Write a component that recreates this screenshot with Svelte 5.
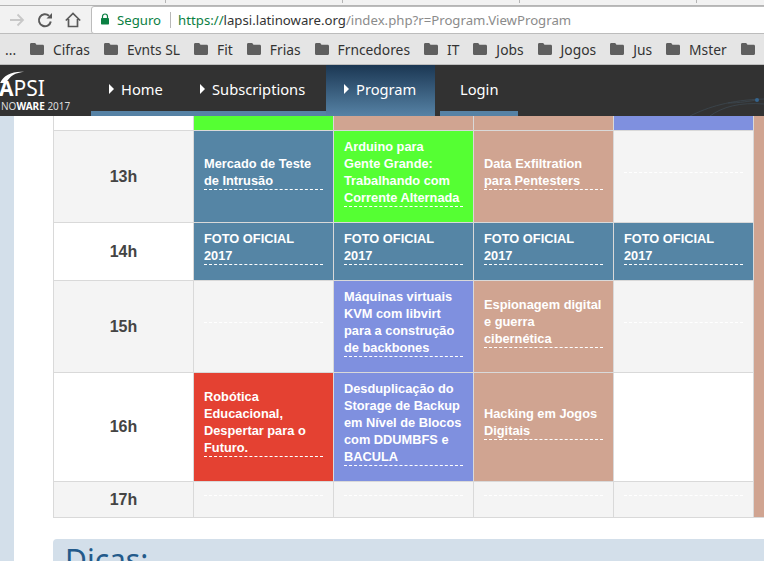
<script>
  const tabs = [166, 177, 177, 177];

  const bookmarks = ['Cifras', 'Evnts SL', 'Fit', 'Frias', 'Frncedores', 'IT', 'Jobs', 'Jogos', 'Jus', 'Mster', ''];

  const links = [
    { label: 'Home', arrow: true, width: 91 },
    { label: 'Subscriptions', arrow: true, width: 144 },
    { label: 'Program', arrow: true, active: true, width: 109 },
    { label: 'Login', arrow: false, width: 78 }
  ];

  const rows = [
    {
      time: '13h', cls: 'r13', shade: true,
      cells: [
        { text: 'Mercado de Teste de Intrusão', color: 'steel' },
        { text: 'Arduino para Gente Grande: Trabalhando com Corrente Alternada', color: 'green' },
        { text: 'Data Exfiltration para Pentesters', color: 'tan' },
        { text: '', color: '' }
      ]
    },
    {
      time: '14h', cls: 'r14', shade: false,
      cells: [
        { text: 'FOTO OFICIAL 2017', color: 'steel' },
        { text: 'FOTO OFICIAL 2017', color: 'steel' },
        { text: 'FOTO OFICIAL 2017', color: 'steel' },
        { text: 'FOTO OFICIAL 2017', color: 'steel' }
      ]
    },
    {
      time: '15h', cls: 'r15', shade: true,
      cells: [
        { text: '', color: '' },
        { text: 'Máquinas virtuais KVM com libvirt para a construção de backbones', color: 'blue' },
        { text: 'Espionagem digital e guerra cibernética', color: 'tan' },
        { text: '', color: '' }
      ]
    },
    {
      time: '16h', cls: 'r16', shade: false,
      cells: [
        { text: 'Robótica Educacional, Despertar para o Futuro.', color: 'red' },
        { text: 'Desduplicação do Storage de Backup em Nível de Blocos com DDUMBFS e BACULA', color: 'blue' },
        { text: 'Hacking em Jogos Digitais', color: 'tan' },
        { text: '', color: '', none: true }
      ]
    },
    {
      time: '17h', cls: 'r17', shade: true,
      cells: [
        { text: '', color: '' },
        { text: '', color: '' },
        { text: '', color: '' },
        { text: '', color: '' }
      ]
    }
  ];
</script>

<div class="browser">
  <div class="tabstrip">
    {#each tabs as width}
      <span class="tab" style="width: {width}px"></span>
    {/each}
  </div>
  <div class="toolbar">
    <svg class="tool fwd" viewBox="0 0 16 16"><path d="M1 8h13M8.500 2.500 14 8l-5.500 5.500" fill="none" stroke="#c8c8c8" stroke-width="1.800"/></svg>
    <svg class="tool" viewBox="0 0 16 16"><path d="M13.800 9.500A6 6 0 1 1 12 3.800" fill="none" stroke="#5a5a5a" stroke-width="2"/><path d="M9.500 6.500h5.500V1z" fill="#5a5a5a"/></svg>
    <svg class="tool home" viewBox="0 0 16 16"><path d="M.8 8.500 8 1.500l7.200 7M3.500 7v7.500h9V7" fill="none" stroke="#5a5a5a" stroke-width="1.700"/></svg>
    <div class="omnibox">
      <svg class="lock" viewBox="0 0 10 12"><path d="M2.500 5V3.500a2.500 2.500 0 0 1 5 0V5" fill="none" stroke="#0b8043" stroke-width="1.200"/><rect x="1" y="5" width="8" height="6.500" rx=".7" fill="#0b8043"/></svg>
      <span class="secure">Seguro</span>
      <span class="sep"></span>
      <span class="url"><span class="scheme">https://</span><span class="host">lapsi.latinoware.org</span>/index.php?r=Program.ViewProgram</span>
    </div>
  </div>
  <div class="bookmarks">
    <span class="more">...</span>
    {#each bookmarks as name}
      <span class="mark">
        <svg viewBox="0 0 14 12"><path d="M0 1.500C0 .7.500 0 1.300 0h3.900l1.300 1.700h6.200c.7 0 1.300.6 1.300 1.300v7.500c0 .8-.6 1.500-1.300 1.500H1.300C.5 12 0 11.300 0 10.500z" fill="#5f5f5f"/></svg>
        {name}
      </span>
    {/each}
  </div>
</div>

<nav class="nav">
  <div class="logo">
    <svg class="swoosh" viewBox="0 0 30 14"><path d="M0 14C4 5 14 0 28 1 18 2 11 6 7 14z" fill="#fff"/></svg>
    <div class="apsi"><span class="big-a">A</span>PSI</div>
    <div class="noware">NO<b>WARE</b> 2017</div>
  </div>
  <ul class="menu">
    {#each links as link}
      <li class:active={link.active} class:login={!link.arrow} style="width: {link.width}px">
        {#if link.arrow}<i class="arrow"></i>{/if}{link.label}
      </li>
    {/each}
  </ul>
  <svg class="network" viewBox="0 0 104 51"><g fill="none" stroke="#3e4a54" stroke-width=".7"><path d="M30 51C48 42 70 35 104 34M50 51C62 42 80 37 104 39M68 38C80 38 90 36 97 35"/></g><circle cx="97" cy="35" r="2" fill="#35658f"/></svg>
</nav>

<main class="page">
  <div class="content">
    <table class="schedule">
      <tbody>
        <tr class="r12">
          <td></td>
          <td class="green"></td>
          <td class="tan"></td>
          <td class="tan"></td>
          <td class="blue"></td>
          <td class="tan" rowspan="6"></td>
        </tr>
        {#each rows as row}
          <tr class={row.cls}>
            <td class="time" class:shade={row.shade}>{row.time}</td>
            {#each row.cells as cell}
              <td class={cell.color} class:shade={row.shade && !cell.color}>
                {#if !cell.none}
                  <div class="talk" class:empty={!cell.text}>{cell.text}</div>
                {/if}
              </td>
            {/each}
          </tr>
        {/each}
      </tbody>
    </table>
    <section class="tips">
      <h2>Dicas:</h2>
    </section>
  </div>
</main>

<style>
  :global(body) {
    background: #d3dfea;
    overflow: hidden;
  }

  .browser {
    font-family: "Noto Sans", sans-serif;
    background: #e5e5e5;
  }

  .tabstrip {
    height: 6px;
    background: #f2f2f2;
    border-bottom: 1px solid #b5b5b5;
    box-sizing: border-box;
    display: flex;
  }

  .tab {
    height: 3px;
    border-right: 1px solid #b5b5b5;
    box-sizing: border-box;
  }

  .toolbar {
    height: 28px;
    background: #f2f2f2;
    display: flex;
    align-items: center;
    padding-left: 9px;
    gap: 12px;
    border-bottom: 1px solid #bdbdbd;
    box-sizing: border-box;
  }

  .tool {
    width: 16px;
    height: 16px;
    flex: none;
  }

  .omnibox {
    flex: 1;
    height: 28px;
    margin-left: -2px;
    margin-right: -4px;
    background: #fff;
    border: 1px solid #bcbcbc;
    border-radius: 3px 0 0 3px;
    box-sizing: border-box;
    display: flex;
    align-items: center;
    padding-left: 8px;
    font-size: 13.200px;
    color: #8b8b8b;
    white-space: nowrap;
  }

  .lock {
    width: 10px;
    height: 12px;
    margin-right: 7px;
    margin-bottom: 2px;
  }

  .secure {
    color: #0b8043;
  }

  .sep {
    width: 1px;
    height: 16px;
    background: #b8b8b8;
    margin: 0 7px 0 9px;
  }

  .scheme {
    color: #0b8043;
  }

  .host {
    color: #333;
  }

  .bookmarks {
    height: 31px;
    box-sizing: border-box;
    display: flex;
    align-items: center;
    font-size: 13.800px;
    color: #333;
    padding-left: 5px;
    white-space: nowrap;
    overflow: hidden;
    border-bottom: 1px solid #bdbdbd;
  }

  .more {
    margin-right: 14px;
  }

  .mark {
    display: inline-flex;
    align-items: center;
    gap: 9px;
    margin-right: 14px;
  }

  .mark svg {
    width: 14px;
    height: 12px;
  }

  .nav {
    height: 51px;
    background: #323232;
    display: flex;
    position: relative;
    font-family: "Noto Sans", sans-serif;
    overflow: hidden;
  }

  .logo {
    width: 91px;
    flex: none;
    position: relative;
    color: #fff;
    overflow: hidden;
  }

  .swoosh {
    position: absolute;
    left: 0;
    top: 6px;
    width: 26px;
    height: 12px;
  }

  .apsi {
    position: absolute;
    left: 0;
    top: 9px;
    font-size: 21px;
    line-height: 28px;
  }

  .big-a {
    font-weight: 700;
    margin-left: -1px;
  }

  .noware {
    position: absolute;
    left: 1px;
    top: 34px;
    font-size: 10px;
    line-height: 14px;
    color: #ddd;
  }

  .noware b {
    color: #fff;
  }

  .menu {
    list-style: none;
    margin: 0;
    padding: 0;
    display: flex;
    color: #fff;
    font-size: 14.700px;
  }

  .menu li {
    display: flex;
    align-items: center;
    box-sizing: border-box;
    height: 51px;
    border-bottom: 5px solid #5682a5;
    padding: 2px 0 0 18px;
  }

  .menu li.active {
    border-bottom: 0;
    background: linear-gradient(#1b3753, #5682a5);
    padding-bottom: 5px;
    margin-right: 5px;
  }

  .menu li.login {
    padding-left: 20px;
  }

  .arrow {
    width: 0;
    height: 0;
    border-left: 5px solid #fff;
    border-top: 5px solid transparent;
    border-bottom: 5px solid transparent;
    margin-right: 7px;
  }

  .network {
    position: absolute;
    right: 0;
    top: 0;
    width: 104px;
    height: 51px;
  }

  .page {
    padding-left: 14px;
  }

  .content {
    background: #fff;
    padding-left: 39px;
    height: 445px;
    overflow: hidden;
    width: 800px;
  }

  .schedule {
    border-collapse: collapse;
    table-layout: fixed;
    width: 841px;
    font-family: "Liberation Sans", Arial, sans-serif;
  }

  .schedule td {
    border: 1px solid #d9d9d9;
    padding: 7px 10px 15px;
    width: 140px;
    box-sizing: border-box;
    color: #fff;
    font-size: 12.800px;
    font-weight: 700;
    line-height: 17px;
    vertical-align: middle;
  }

  .schedule .r12 td {
    padding: 0;
    height: 14px;
    border-top: 0;
  }

  .schedule .time {
    color: #444;
    font-size: 16px;
    text-align: center;
    padding: 0;
  }

  .r17 .time {
    height: 36px;
  }

  .talk {
    border-bottom: 1px dashed #fff;
  }

  .talk.empty {
    height: 0;
  }

  .shade {
    background: #f4f4f4;
  }

  .schedule .steel {
    background: #5585a5;
  }

  .schedule .green {
    background: #55ff33;
  }

  .schedule .tan {
    background: #d0a491;
  }

  .schedule .blue {
    background: #7f90df;
  }

  .schedule .red {
    background: #e44132;
  }

  .tips {
    margin-top: 21px;
    background: #d3dfea;
    border-radius: 4px;
    padding: 2px 12px;
  }

  .tips h2 {
    margin: 0;
    font-family: "Noto Sans", sans-serif;
    font-weight: 400;
    font-size: 30px;
    line-height: 38px;
    color: #235a8a;
  }
</style>
